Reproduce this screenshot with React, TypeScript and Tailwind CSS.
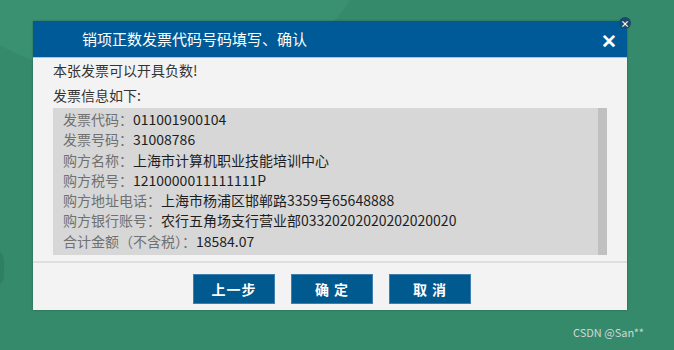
import React from "react";

const rows: [string, string][] = [
  ["发票代码：", "011001900104"],
  ["发票号码：", "31008786"],
  ["购方名称：", "上海市计算机职业技能培训中心"],
  ["购方税号：", "1210000011111111P"],
  ["购方地址电话：", "上海市杨浦区邯郸路3359号65648888"],
  ["购方银行账号：", "农行五角场支行营业部03320202020202020020"],
  ["合计金额（不含税）：", "18584.07"],
];

export default function App() {
  return (
    <div
      className="relative h-[350px] w-[674px] overflow-hidden bg-[#358a6c]"
      style={{ fontFamily: '"Noto Sans CJK SC", "Noto Sans", sans-serif' }}
    >
      {/* background decoration */}
      <div className="absolute left-[-60px] top-[-150px] h-[230px] w-[420px] rounded-[50%] bg-[#3a9172]" />
      <div className="absolute left-[-22px] top-[248px] h-[40px] w-[26px] rounded-full bg-[#2f7f63]" />

      <div className="relative flex flex-col pl-[33px] pt-[21px]">
        <div className="flex h-[289px] w-[594px] flex-col bg-[#f3f3f3] shadow-[0_0_2px_rgba(0,0,0,0.3)]">
          <div className="relative flex h-[37px] items-center border-b border-[#9cc9e8] bg-[#005a97] pl-[49px] pr-[10px] text-[15px] text-white">
            <span className="flex-1">销项正数发票代码号码填写、确认</span>
            <span className="text-[19px] font-semibold leading-none">✕</span>
            <span className="absolute right-[-4px] top-[-4px] flex h-[12px] w-[12px] items-center justify-center rounded-full bg-[#1a4a6a] text-[9px] font-bold leading-none text-white">
              ×
            </span>
          </div>

          <div className="flex flex-col px-[20px]">
            <p className="text-[14px] leading-[24px] text-[#333]">本张发票可以开具负数!</p>
            <p className="text-[14px] leading-[26px] text-[#333]">发票信息如下:</p>
            <div className="flex h-[147px] bg-[#d7d7d7]">
              <div className="flex-1 pl-[10px] pt-[1px]">
                {rows.map(([label, value]) => (
                  <div key={label} className="flex text-[14px] leading-[20.3px]">
                    <span className="text-[#707070]">{label}</span>
                    <span className="text-[#1e1e1e]">{value}</span>
                  </div>
                ))}
              </div>
              <div className="w-[9px] bg-[#c0c0c0]" />
            </div>
          </div>

          <div className="mt-[6px] h-[2px] bg-[#dedede]" />

          <div className="mt-[11px] flex justify-center gap-[16px] pl-[4px]">
            {["上一步", "确 定", "取 消"].map((t) => (
              <button
                key={t}
                type="button"
                className="h-[30px] w-[82px] border border-[#3f7fae] bg-[#005a8f] text-[14px] font-bold tracking-[1px] text-white"
              >
                {t}
              </button>
            ))}
          </div>
        </div>
      </div>

      <div className="absolute bottom-[10px] right-[30px] text-[11px] text-[#d0d8d4]">CSDN @San**</div>
    </div>
  );
}
